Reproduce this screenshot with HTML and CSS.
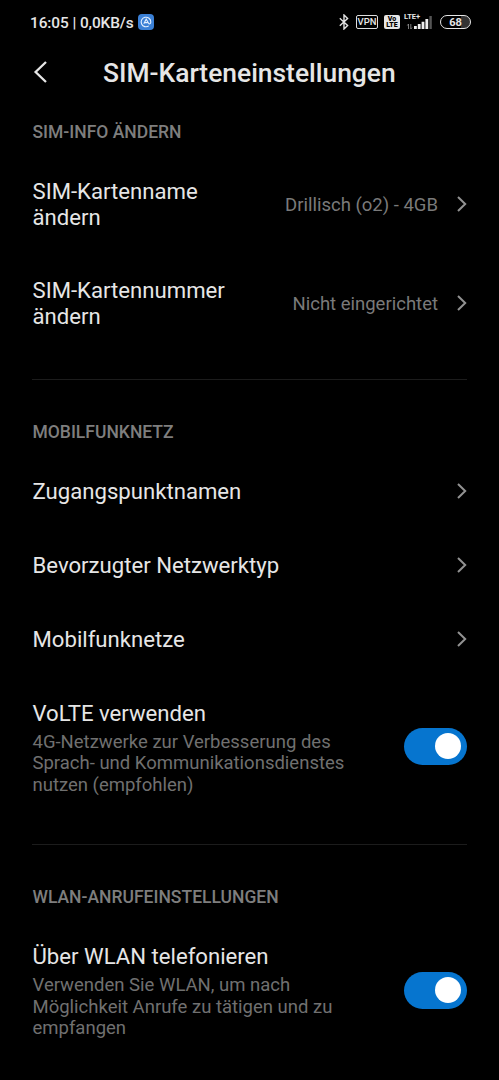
FILE: index.html
```html
<!DOCTYPE html>
<html lang="de">
<head>
    <meta charset="UTF-8">
    <meta name="viewport" content="width=device-width, initial-scale=1.0">
    <title>SIM-Karteneinstellungen</title>
    <link rel="stylesheet" href="styles.css">
</head>
<body>
    <div class="status">
        <div class="status_left">
            <span class="time">16:05 | 0,0KB/s</span>
            <svg class="app" width="16" height="16" viewBox="0 0 16 16">
                <rect width="16" height="16" rx="4" fill="#3b80d6"/>
                <path d="M10.8 11.9A4.8 4.8 0 1 1 12.8 8c0 2-1.6 2.4-2.4.9L8.2 5.2 5.8 9.8M6.8 8.6h2.8" fill="none" stroke="#e4efff" stroke-width="1.1"/>
            </svg>
        </div>
        <div class="status_right">
            <svg class="bt" width="10" height="16" viewBox="0 0 10 16">
                <path d="M.8 4.3 8.6 11.5 5 15V1l3.6 3.5L.8 11.7" fill="none" stroke="#e4e4e4" stroke-width="1.4"/>
            </svg>
            <span class="vpn">VPN</span>
            <span class="volte"><span>Vo</span><span>LTE</span></span>
            <div class="signal">
                <span class="lte">LTE+</span>
                <svg width="28" height="15" viewBox="0 0 28 15">
                    <path d="M3.5 9v5M2.3 10.5 3.5 9M5.8 9v5M7 12.5 5.8 14" fill="none" stroke="#999" stroke-width=".8"/>
                    <path d="M9 11h2.8v3H9zM12.8 9h2.8v5h-2.8zM16.6 6.8h2.8V14h-2.8zM20.4 4h2.8v10h-2.8z" fill="#eee"/>
                    <path d="M24.4 1h2.4v13h-2.4z" fill="#555"/>
                </svg>
            </div>
            <span class="battery">68</span>
        </div>
    </div>
    <div class="header">
        <svg class="back" width="16" height="24" viewBox="0 0 16 24">
            <path d="M14 2 3.6 12 14 22" fill="none" stroke="#e6e6e6" stroke-width="2.3"/>
        </svg>
        <h1>SIM-Karteneinstellungen</h1>
    </div>

    <div class="section">
        <h2>SIM-INFO ÄNDERN</h2>
        <div class="item tall">
            <div class="name">SIM-Kartenname<br>ändern</div>
            <span class="value">Drillisch (o2) - 4GB</span>
            <svg class="arrow" width="10" height="16" viewBox="0 0 10 16"><path d="M1 1l7.2 7L1 15" /></svg>
        </div>
        <div class="item tall">
            <div class="name">SIM-Kartennummer<br>ändern</div>
            <span class="value">Nicht eingerichtet</span>
            <svg class="arrow" width="10" height="16" viewBox="0 0 10 16"><path d="M1 1l7.2 7L1 15" /></svg>
        </div>
    </div>

    <div class="section line">
        <h2>MOBILFUNKNETZ</h2>
        <div class="item">
            <div class="name">Zugangspunktnamen</div>
            <svg class="arrow" width="10" height="16" viewBox="0 0 10 16"><path d="M1 1l7.2 7L1 15" /></svg>
        </div>
        <div class="item">
            <div class="name">Bevorzugter Netzwerktyp</div>
            <svg class="arrow" width="10" height="16" viewBox="0 0 10 16"><path d="M1 1l7.2 7L1 15" /></svg>
        </div>
        <div class="item">
            <div class="name">Mobilfunknetze</div>
            <svg class="arrow" width="10" height="16" viewBox="0 0 10 16"><path d="M1 1l7.2 7L1 15" /></svg>
        </div>
        <div class="item tall">
            <div class="name">VoLTE verwenden
                <p>4G-Netzwerke zur Verbesserung des<br>Sprach- und Kommunikationsdienstes<br>nutzen (empfohlen)</p>
            </div>
            <div class="switch"><span class="knob"></span></div>
        </div>
    </div>

    <div class="section line last">
        <h2>WLAN-ANRUFEINSTELLUNGEN</h2>
        <div class="item tall">
            <div class="name">Über WLAN telefonieren
                <p>Verwenden Sie WLAN, um nach<br>Möglichkeit Anrufe zu tätigen und zu<br>empfangen</p>
            </div>
            <div class="switch"><span class="knob"></span></div>
        </div>
    </div>
</body>
</html>
```
FILE: styles.css
```css
*{
    margin: 0;
    padding: 0;
    box-sizing: border-box;
}
body{
    height: 1080px;
    background: #000;
    color: #e6e6e6;
    font-family: Roboto, "Liberation Sans", sans-serif;
    overflow: hidden;
}
svg{
    display: block;
    flex: none;
}
.status{
    height: 44px;
    padding: 0 28px 0 30px;
    display: flex;
    align-items: center;
    justify-content: space-between;
}
.status_left,
.status_right{
    display: flex;
    align-items: center;
}
.time{
    padding-top: 1px;
    font-size: 15.4px;
    font-weight: 500;
    letter-spacing: -0.08px;
    white-space: nowrap;
}
.app{
    margin-left: 4px;
}
.bt{
    margin-right: -1px;
    position: relative;
    left: -1px;
}
.vpn{
    width: 22px;
    height: 14px;
    margin-left: 7px;
    border: 1px solid #ddd;
    border-radius: 2px;
    font-size: 9.5px;
    font-weight: 500;
    line-height: 12px;
    text-align: center;
}
.volte{
    width: 16px;
    height: 14px;
    margin-left: 6px;
    border-radius: 2px;
    background: #e6e6e6;
    color: #000;
    font-size: 7px;
    font-weight: 900;
    line-height: 6px;
    padding: 1px;
}
.volte span{
    display: block;
    text-align: center;
}
.signal{
    position: relative;
    margin-left: 5px;
}
.lte{
    position: absolute;
    left: -1px;
    top: -2px;
    font-size: 7.5px;
    font-weight: 700;
    line-height: 8px;
}
.battery{
    width: 31px;
    height: 14px;
    margin-left: 7px;
    border: 1.5px solid #e6e6e6;
    border-radius: 7px;
    background: linear-gradient(90deg, #000 68%, #333 68%);
    font-size: 11px;
    font-weight: 700;
    line-height: 13px;
    text-align: center;
}
.header{
    height: 56px;
    padding-left: 32px;
    display: flex;
    align-items: center;
}
.header h1{
    margin-left: 55px;
    padding-top: 1px;
    font-size: 26.4px;
    font-weight: 500;
    line-height: 30px;
}
.section{
    margin: 0 32px;
    padding-top: 22px;
}
.section h2{
    height: 33px;
    padding-left: 0.5px;
    color: #7e7e7e;
    font-size: 17.5px;
    font-weight: 500;
    line-height: 21px;
}
.line{
    margin-top: 26px;
    padding-top: 42px;
    border-top: 1px solid #1c1c1c;
}
.last{
    margin-top: 23px;
}
.last h2{
    height: 34px;
}
.item{
    height: 74px;
    padding-bottom: 2px;
    display: flex;
    align-items: center;
}
.tall{
    height: auto;
    padding: 22.5px 0 24.5px;
}
.name{
    flex: 1;
    padding-left: 0.5px;
    font-size: 22.15px;
    line-height: 26px;
    white-space: nowrap;
}
.name p{
    margin-top: 6px;
    color: #707070;
    font-size: 18.5px;
    line-height: 21.6px;
}
.value{
    color: #7a7a7a;
    font-size: 18.5px;
    margin-right: 19px;
    padding-top: 2px;
}
.arrow path{
    fill: none;
    stroke: #929292;
    stroke-width: 2;
}
.switch{
    width: 63px;
    height: 37px;
    margin-bottom: 3px;
    padding: 5px 6px;
    border-radius: 19px;
    background: #0675cf;
}
.knob{
    display: block;
    width: 26px;
    height: 26px;
    margin-left: auto;
    border-radius: 50%;
    background: #fff;
}
```
